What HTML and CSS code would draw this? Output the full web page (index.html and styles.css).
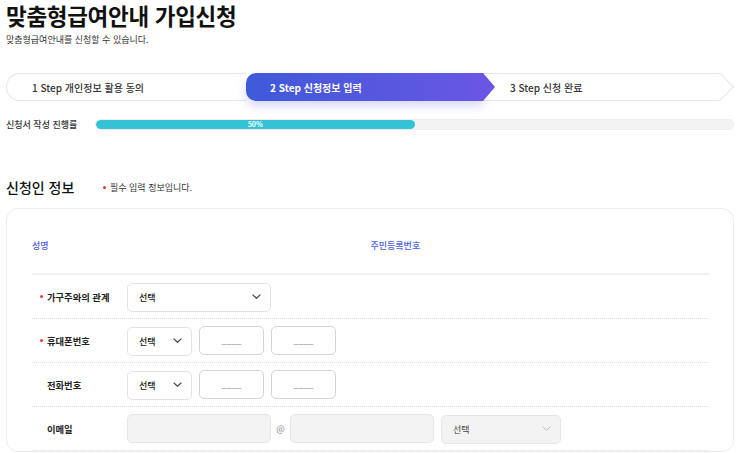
FILE: index.html
```html
<!DOCTYPE html>
<html lang="ko">
<head>
    <meta charset="UTF-8">
    <meta name="viewport" content="width=device-width, initial-scale=1.0">
    <title>맞춤형급여안내 가입신청</title>
    <link rel="stylesheet" href="styles.css">
</head>
<body>
    <div class="page">
        <h1 class="page-title">맞춤형급여안내 가입신청</h1>
        <p class="page-desc">맞춤형급여안내를 신청할 수 있습니다.</p>

        <ol class="steps">
            <li class="step step-1">1 Step 개인정보 활용 동의</li>
            <li class="step step-2">2 Step 신청정보 입력</li>
            <li class="step step-3">3 Step 신청 완료</li>
        </ol>

        <div class="progress">
            <span class="progress-label">신청서 작성 진행률</span>
            <div class="progress-track">
                <div class="progress-fill" style="width: 50%;">50%</div>
            </div>
        </div>

        <div class="section-head">
            <h2>신청인 정보</h2>
            <p class="required-note">필수 입력 정보입니다.</p>
        </div>

        <div class="form-card">
            <div class="info-head">
                <span>성명</span>
                <span>주민등록번호</span>
            </div>

            <div class="form-row">
                <label class="form-label required">가구주와의 관계</label>
                <div class="form-controls">
                    <div class="select-box select-lg">
                        <select><option>선택</option></select>
                        <svg class="chevron" width="9" height="5" viewBox="0 0 9 5"><polyline points="0.6 0.6 4.5 4.3 8.4 0.6" fill="none" stroke="currentColor" stroke-width="1.2"/></svg>
                    </div>
                </div>
            </div>

            <div class="form-row">
                <label class="form-label required">휴대폰번호</label>
                <div class="form-controls">
                    <div class="select-box select-sm">
                        <select><option>선택</option></select>
                        <svg class="chevron" width="9" height="5" viewBox="0 0 9 5"><polyline points="0.6 0.6 4.5 4.3 8.4 0.6" fill="none" stroke="currentColor" stroke-width="1.2"/></svg>
                    </div>
                    <input type="text" class="input-field input-sm" placeholder="____">
                    <input type="text" class="input-field input-sm" placeholder="____">
                </div>
            </div>

            <div class="form-row">
                <label class="form-label">전화번호</label>
                <div class="form-controls">
                    <div class="select-box select-sm">
                        <select><option>선택</option></select>
                        <svg class="chevron" width="9" height="5" viewBox="0 0 9 5"><polyline points="0.6 0.6 4.5 4.3 8.4 0.6" fill="none" stroke="currentColor" stroke-width="1.2"/></svg>
                    </div>
                    <input type="text" class="input-field input-sm" placeholder="____">
                    <input type="text" class="input-field input-sm" placeholder="____">
                </div>
            </div>

            <div class="form-row">
                <label class="form-label">이메일</label>
                <div class="form-controls email-controls">
                    <input type="text" class="input-field input-lg is-disabled" disabled>
                    <span class="at">@</span>
                    <input type="text" class="input-field input-lg is-disabled" disabled>
                    <div class="select-box select-md is-disabled">
                        <select disabled><option>선택</option></select>
                        <svg class="chevron" width="9" height="5" viewBox="0 0 9 5"><polyline points="0.6 0.6 4.5 4.3 8.4 0.6" fill="none" stroke="currentColor" stroke-width="1"/></svg>
                    </div>
                </div>
            </div>
        </div>
    </div>
</body>
</html>
```

FILE: styles.css
```css
:root {
    --text-color: #222;
    --sub-text: #333;
    --border-color: #e6e6e6;
    --input-border: #d4d4d4;
    --blue: #4b5fe2;
    --step-start: #3e5ad8;
    --step-end: #6956e4;
    --progress-color: #34c3d4;
    --required: #e8383d;
}

* {
    margin: 0;
    padding: 0;
    box-sizing: border-box;
}

body {
    font-family: "Noto Sans CJK KR", "Noto Sans", sans-serif;
    color: var(--text-color);
    background: #fff;
}

.page {
    padding: 0 6px;
}

.page-title {
    font-size: 22.5px;
    font-weight: 700;
    line-height: 30px;
    color: #111;
    letter-spacing: -0.3px;
}

.page-desc {
    margin-top: 3px;
    font-size: 9px;
    line-height: 14px;
    color: var(--sub-text);
}

/* steps */
.steps {
    list-style: none;
    display: flex;
    height: 28px;
    margin-top: 26px;
}

.step {
    position: relative;
    display: flex;
    align-items: center;
    font-size: 10px;
    font-weight: 500;
    color: var(--sub-text);
    background: #fff;
    border: 1px solid var(--border-color);
}

.step-1 {
    flex: 0 0 240px;
    padding-left: 25px;
    border-right: none;
    border-radius: 14px 0 0 14px;
}

.step-2 {
    flex: 0 0 237px;
    padding-left: 24px;
    border: none;
    border-radius: 10px 0 0 10px;
    color: #fff;
    font-weight: 700;
    background: linear-gradient(90deg, var(--step-start) 0%, var(--step-end) 100%);
    box-shadow: 0 5px 10px rgba(70, 80, 220, 0.22);
    z-index: 2;
}

.step-2::after {
    content: '';
    position: absolute;
    top: 0;
    right: -12px;
    border-left: 12px solid var(--step-end);
    border-top: 14px solid transparent;
    border-bottom: 14px solid transparent;
}

.step-3 {
    flex: 1;
    margin-right: 14px;
    padding-left: 27px;
    border-left: none;
    border-right: none;
    z-index: 1;
}

.step-3::after {
    content: '';
    position: absolute;
    top: 3px;
    right: -10px;
    width: 19px;
    height: 19px;
    background: #fff;
    border-top: 1px solid var(--border-color);
    border-right: 1px solid var(--border-color);
    transform: rotate(45deg);
}

/* progress */
.progress {
    display: flex;
    align-items: center;
    margin-top: 18px;
}

.progress-label {
    flex: 0 0 89px;
    font-size: 9px;
    line-height: 11px;
    font-weight: 500;
    color: var(--sub-text);
}

.progress-track {
    flex: 1;
    height: 11px;
    background: #f3f3f3;
    border: 1px solid #ededed;
    border-radius: 6px;
    overflow: hidden;
}

.progress-fill {
    height: 100%;
    background: var(--progress-color);
    border-radius: 6px;
    color: #fff;
    font-size: 7px;
    font-weight: 700;
    line-height: 9px;
    text-align: center;
}

/* section */
.section-head {
    display: flex;
    align-items: center;
    margin-top: 47px;
    height: 20px;
}

.section-head h2 {
    font-size: 14px;
    font-weight: 500;
    color: #111;
    width: 97px;
}

.required-note {
    display: flex;
    align-items: center;
    font-size: 9px;
    color: var(--sub-text);
}

.required-note::before,
.form-label.required::before {
    content: '';
    display: inline-block;
    width: 3px;
    height: 3px;
    border-radius: 50%;
    background: var(--required);
    margin-right: 4px;
}

.form-card {
    margin-top: 11px;
    border: 1px solid #ececec;
    border-radius: 12px;
    padding: 28px 24px 0 25px;
}

.info-head {
    display: grid;
    grid-template-columns: 1fr 1fr;
    font-size: 9px;
    font-weight: 500;
    line-height: 18px;
    color: var(--blue);
    padding-bottom: 18px;
    border-bottom: 2px solid #f0f0f0;
}

.form-row {
    display: flex;
    align-items: center;
    height: 44px;
    border-bottom: 1px dotted #dedede;
}

.form-label {
    display: flex;
    align-items: center;
    flex: 0 0 95px;
    padding-left: 15px;
    font-size: 9.3px;
    font-weight: 700;
    color: var(--text-color);
}

.form-label.required {
    padding-left: 8px;
}

.form-controls {
    display: flex;
    align-items: center;
    gap: 7px;
}

.email-controls {
    gap: 0;
}

.select-box {
    position: relative;
    height: 29px;
}

.select-box select {
    appearance: none;
    -webkit-appearance: none;
    width: 100%;
    height: 100%;
    padding-left: 11px;
    font-family: inherit;
    font-size: 9px;
    font-weight: 500;
    color: var(--text-color);
    background: #fff;
    border: 1px solid #e3e3e3;
    border-radius: 5px;
    outline: none;
}

.chevron {
    position: absolute;
    top: 12px;
    right: 10px;
    color: #444;
    pointer-events: none;
}

.select-lg { width: 144px; }
.select-sm { width: 65px; }
.select-md { width: 120px; margin-left: 7px; }

.select-box.is-disabled select {
    background: #f3f3f3;
    border-color: #e6e6e6;
    color: #444;
    font-weight: 400;
    opacity: 1;
}

.select-box.is-disabled .chevron {
    color: #bbb;
}

.input-field {
    height: 29px;
    border: 1px solid var(--input-border);
    border-radius: 5px;
    font-family: inherit;
    font-size: 9px;
    text-align: center;
    background: #fff;
    outline: none;
}

.input-field::placeholder {
    color: #888;
}

.input-sm { width: 65px; }
.input-lg { width: 144px; }

.input-field.is-disabled {
    background: #f3f3f3;
    border-color: #e6e6e6;
}

.at {
    width: 19px;
    text-align: center;
    font-size: 9px;
    color: #888;
}
```
